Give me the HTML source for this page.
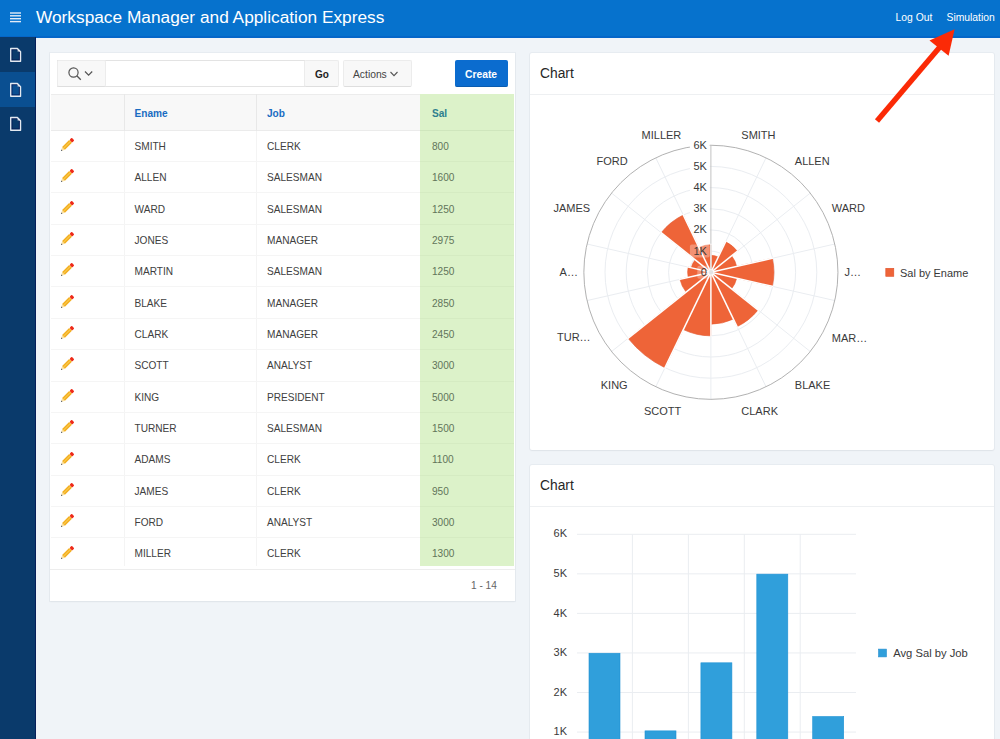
<!DOCTYPE html>
<html><head><meta charset="utf-8">
<style>
*{box-sizing:border-box;margin:0;padding:0}
html,body{width:1000px;height:739px;overflow:hidden;background:#f0f4f8;font-family:"Liberation Sans",sans-serif;color:#333}
.a{position:absolute;white-space:nowrap}
.hdr{position:absolute;left:0;top:0;width:1000px;height:37.5px;background:#0672cd;box-shadow:inset 0 -2px 0 #0566c8}
.title{left:36px;top:7.2px;font-size:17.3px;color:#fff}
.lk{top:12px;font-size:10.35px;color:#fff}
.side{position:absolute;left:0;top:37px;width:36px;height:702px;background:#0a3a6b;border-right:1px solid #061f5a}
.card{position:absolute;background:#fff;box-shadow:0 0 0 1px rgba(0,20,60,.035),0 1px 2px rgba(0,0,0,.04)}
.rtitle{left:10px;top:13.7px;font-size:13.8px;color:#262626}
.rhdr{position:absolute;left:0;top:0;right:0;height:42px;border-bottom:1px solid #eef0f2}
.btn{position:absolute;background:#f8f8f8;border:1px solid #ececec;border-bottom-color:#dedede;border-radius:2px}
.cell{font-size:10.1px;color:#404040}
.hcell{font-size:10.1px;font-weight:bold;color:#1a6cc2}
.vline{position:absolute;width:1px;background:#f4f4f4}
.hline{position:absolute;height:1px;background:#f5f5f5}
</style></head><body>

<div class="hdr">
<svg class="a" style="left:10px;top:12px" width="11" height="11" viewBox="0 0 11 11"><rect x="0" y="0.3" width="11" height="1.4" fill="#e3ecf7"/><rect x="0" y="3.1" width="11" height="1.4" fill="#e3ecf7"/><rect x="0" y="6.0" width="11" height="1.4" fill="#e3ecf7"/><rect x="0" y="8.9" width="11" height="1.4" fill="#e3ecf7"/></svg>
<div class="a title">Workspace Manager and Application Express</div>
<div class="a lk" style="left:895.5px">Log Out</div>
<div class="a lk" style="left:946.5px">Simulation</div>
</div>
<div class="side">
<div class="a" style="left:0;top:35px;width:35px;height:34.5px;background:#0a4f91"></div>
<svg class="a" style="left:10px;top:10.0px" width="12" height="16" viewBox="0 0 12 16"><path d="M1.85 2.65 H6.9 L9.4 5.1 V13.05 H1.85 Z" fill="none" stroke="#03124f" stroke-width="0.9"/><path d="M0.7 1.5 H7.4 L10.55 4.65 V14.2 H0.7 Z" fill="none" stroke="#e4e9f0" stroke-width="1.35" stroke-linejoin="round"/><path d="M7.6 1.9 L10.1 4.4 L7.6 4.4 Z" fill="#e4e9f0"/></svg>
<svg class="a" style="left:10px;top:44.5px" width="12" height="16" viewBox="0 0 12 16"><path d="M1.85 2.65 H6.9 L9.4 5.1 V13.05 H1.85 Z" fill="none" stroke="#03124f" stroke-width="0.9"/><path d="M0.7 1.5 H7.4 L10.55 4.65 V14.2 H0.7 Z" fill="none" stroke="#e4e9f0" stroke-width="1.35" stroke-linejoin="round"/><path d="M7.6 1.9 L10.1 4.4 L7.6 4.4 Z" fill="#e4e9f0"/></svg>
<svg class="a" style="left:10px;top:79.0px" width="12" height="16" viewBox="0 0 12 16"><path d="M1.85 2.65 H6.9 L9.4 5.1 V13.05 H1.85 Z" fill="none" stroke="#03124f" stroke-width="0.9"/><path d="M0.7 1.5 H7.4 L10.55 4.65 V14.2 H0.7 Z" fill="none" stroke="#e4e9f0" stroke-width="1.35" stroke-linejoin="round"/><path d="M7.6 1.9 L10.1 4.4 L7.6 4.4 Z" fill="#e4e9f0"/></svg>
</div>
<div class="card" style="left:50px;top:52.5px;width:465px;height:548px"></div>
<div class="a" style="left:57px;top:60px;width:248px;height:27px;border:1px solid #e3e3e3;background:#fff"></div>
<div class="btn" style="left:57px;top:60px;width:49px;height:27px"></div>
<svg class="a" style="left:66px;top:66px" width="30" height="16" viewBox="0 0 30 16"><circle cx="7.5" cy="6.5" r="4.6" fill="none" stroke="#555" stroke-width="1.2"/><path d="M10.8 9.8 L14.8 13.8" stroke="#555" stroke-width="1.3"/><path d="M19 5.5 L22.6 9.2 L26.2 5.5" fill="none" stroke="#555" stroke-width="1.2"/></svg>
<div class="btn" style="left:304px;top:60px;width:35px;height:27px"></div>
<div class="a" style="left:315px;top:68.8px;font-size:10px;font-weight:bold;color:#222">Go</div>
<div class="btn" style="left:343px;top:60px;width:69px;height:27px"></div>
<div class="a" style="left:353px;top:68.8px;font-size:10.3px;color:#444">Actions</div>
<svg class="a" style="left:389px;top:70px" width="10" height="8" viewBox="0 0 10 8"><path d="M1.5 2 L5 5.6 L8.5 2" fill="none" stroke="#555" stroke-width="1.1"/></svg>
<div class="a" style="left:455px;top:60px;width:53px;height:27px;background:#0b6ccf;border-radius:2px;border-bottom:1px solid #0a5cb0"></div>
<div class="a" style="left:465px;top:69px;font-size:10.3px;font-weight:bold;color:#fff">Create</div>
<div class="a" style="left:51px;top:94.2px;width:369px;height:36.5px;background:#f8f8f8;border-top:1px solid #ececec;border-bottom:1px solid #ebebeb"></div>
<div class="a" style="left:420px;top:94.2px;width:94px;height:471.4px;background:#dcf2c9"></div>
<div class="a" style="left:420px;top:129.7px;width:94px;height:1px;background:#cfe6bd"></div>
<div class="vline" style="left:124px;top:94.2px;height:36.5px;background:#e8e8e8"></div>
<div class="vline" style="left:124px;top:130.7px;height:434.9px"></div>
<div class="vline" style="left:256px;top:94.2px;height:36.5px;background:#e8e8e8"></div>
<div class="vline" style="left:256px;top:130.7px;height:434.9px"></div>
<div class="hline" style="left:51px;top:161.0px;width:369px"></div>
<div class="hline" style="left:420px;top:161.0px;width:94px;background:#d5ebc2"></div>
<div class="hline" style="left:51px;top:192.4px;width:369px"></div>
<div class="hline" style="left:420px;top:192.4px;width:94px;background:#d5ebc2"></div>
<div class="hline" style="left:51px;top:223.8px;width:369px"></div>
<div class="hline" style="left:420px;top:223.8px;width:94px;background:#d5ebc2"></div>
<div class="hline" style="left:51px;top:255.1px;width:369px"></div>
<div class="hline" style="left:420px;top:255.1px;width:94px;background:#d5ebc2"></div>
<div class="hline" style="left:51px;top:286.4px;width:369px"></div>
<div class="hline" style="left:420px;top:286.4px;width:94px;background:#d5ebc2"></div>
<div class="hline" style="left:51px;top:317.8px;width:369px"></div>
<div class="hline" style="left:420px;top:317.8px;width:94px;background:#d5ebc2"></div>
<div class="hline" style="left:51px;top:349.1px;width:369px"></div>
<div class="hline" style="left:420px;top:349.1px;width:94px;background:#d5ebc2"></div>
<div class="hline" style="left:51px;top:380.5px;width:369px"></div>
<div class="hline" style="left:420px;top:380.5px;width:94px;background:#d5ebc2"></div>
<div class="hline" style="left:51px;top:411.9px;width:369px"></div>
<div class="hline" style="left:420px;top:411.9px;width:94px;background:#d5ebc2"></div>
<div class="hline" style="left:51px;top:443.2px;width:369px"></div>
<div class="hline" style="left:420px;top:443.2px;width:94px;background:#d5ebc2"></div>
<div class="hline" style="left:51px;top:474.6px;width:369px"></div>
<div class="hline" style="left:420px;top:474.6px;width:94px;background:#d5ebc2"></div>
<div class="hline" style="left:51px;top:505.9px;width:369px"></div>
<div class="hline" style="left:420px;top:505.9px;width:94px;background:#d5ebc2"></div>
<div class="hline" style="left:51px;top:537.2px;width:369px"></div>
<div class="hline" style="left:420px;top:537.2px;width:94px;background:#d5ebc2"></div>
<div class="hline" style="left:50px;top:568.6px;width:465px;background:#ededed"></div>
<div class="a hcell" style="left:134.5px;top:107.8px">Ename</div>
<div class="a hcell" style="left:267px;top:107.8px">Job</div>
<div class="a hcell" style="left:432px;top:107.8px;color:#2e7f8e">Sal</div>
<svg class="a" style="left:59.4px;top:137.0px" width="18" height="18" viewBox="0 0 18 18"><g transform="translate(2,14) rotate(-45)"><path d="M0 0 L3.6 -2 L3.6 2 Z" fill="#fbe0a0"/><path d="M0 0 L1.3 -0.75 L1.3 0.75 Z" fill="#2a3a55"/><rect x="3.6" y="-2" width="9.9" height="4" fill="#f3ae1f"/><rect x="3.6" y="-0.7" width="9.9" height="1.2" fill="#f8c84e"/><rect x="13.9" y="-1.9" width="3.1" height="3.8" rx="0.9" fill="#ee2a18"/></g></svg>
<div class="a cell" style="left:134.5px;top:140.9px">SMITH</div>
<div class="a cell" style="left:267px;top:140.9px">CLERK</div>
<div class="a cell" style="left:432px;top:140.9px;color:#62755a">800</div>
<svg class="a" style="left:59.4px;top:168.3px" width="18" height="18" viewBox="0 0 18 18"><g transform="translate(2,14) rotate(-45)"><path d="M0 0 L3.6 -2 L3.6 2 Z" fill="#fbe0a0"/><path d="M0 0 L1.3 -0.75 L1.3 0.75 Z" fill="#2a3a55"/><rect x="3.6" y="-2" width="9.9" height="4" fill="#f3ae1f"/><rect x="3.6" y="-0.7" width="9.9" height="1.2" fill="#f8c84e"/><rect x="13.9" y="-1.9" width="3.1" height="3.8" rx="0.9" fill="#ee2a18"/></g></svg>
<div class="a cell" style="left:134.5px;top:172.2px">ALLEN</div>
<div class="a cell" style="left:267px;top:172.2px">SALESMAN</div>
<div class="a cell" style="left:432px;top:172.2px;color:#62755a">1600</div>
<svg class="a" style="left:59.4px;top:199.7px" width="18" height="18" viewBox="0 0 18 18"><g transform="translate(2,14) rotate(-45)"><path d="M0 0 L3.6 -2 L3.6 2 Z" fill="#fbe0a0"/><path d="M0 0 L1.3 -0.75 L1.3 0.75 Z" fill="#2a3a55"/><rect x="3.6" y="-2" width="9.9" height="4" fill="#f3ae1f"/><rect x="3.6" y="-0.7" width="9.9" height="1.2" fill="#f8c84e"/><rect x="13.9" y="-1.9" width="3.1" height="3.8" rx="0.9" fill="#ee2a18"/></g></svg>
<div class="a cell" style="left:134.5px;top:203.6px">WARD</div>
<div class="a cell" style="left:267px;top:203.6px">SALESMAN</div>
<div class="a cell" style="left:432px;top:203.6px;color:#62755a">1250</div>
<svg class="a" style="left:59.4px;top:231.1px" width="18" height="18" viewBox="0 0 18 18"><g transform="translate(2,14) rotate(-45)"><path d="M0 0 L3.6 -2 L3.6 2 Z" fill="#fbe0a0"/><path d="M0 0 L1.3 -0.75 L1.3 0.75 Z" fill="#2a3a55"/><rect x="3.6" y="-2" width="9.9" height="4" fill="#f3ae1f"/><rect x="3.6" y="-0.7" width="9.9" height="1.2" fill="#f8c84e"/><rect x="13.9" y="-1.9" width="3.1" height="3.8" rx="0.9" fill="#ee2a18"/></g></svg>
<div class="a cell" style="left:134.5px;top:234.9px">JONES</div>
<div class="a cell" style="left:267px;top:234.9px">MANAGER</div>
<div class="a cell" style="left:432px;top:234.9px;color:#62755a">2975</div>
<svg class="a" style="left:59.4px;top:262.4px" width="18" height="18" viewBox="0 0 18 18"><g transform="translate(2,14) rotate(-45)"><path d="M0 0 L3.6 -2 L3.6 2 Z" fill="#fbe0a0"/><path d="M0 0 L1.3 -0.75 L1.3 0.75 Z" fill="#2a3a55"/><rect x="3.6" y="-2" width="9.9" height="4" fill="#f3ae1f"/><rect x="3.6" y="-0.7" width="9.9" height="1.2" fill="#f8c84e"/><rect x="13.9" y="-1.9" width="3.1" height="3.8" rx="0.9" fill="#ee2a18"/></g></svg>
<div class="a cell" style="left:134.5px;top:266.3px">MARTIN</div>
<div class="a cell" style="left:267px;top:266.3px">SALESMAN</div>
<div class="a cell" style="left:432px;top:266.3px;color:#62755a">1250</div>
<svg class="a" style="left:59.4px;top:293.8px" width="18" height="18" viewBox="0 0 18 18"><g transform="translate(2,14) rotate(-45)"><path d="M0 0 L3.6 -2 L3.6 2 Z" fill="#fbe0a0"/><path d="M0 0 L1.3 -0.75 L1.3 0.75 Z" fill="#2a3a55"/><rect x="3.6" y="-2" width="9.9" height="4" fill="#f3ae1f"/><rect x="3.6" y="-0.7" width="9.9" height="1.2" fill="#f8c84e"/><rect x="13.9" y="-1.9" width="3.1" height="3.8" rx="0.9" fill="#ee2a18"/></g></svg>
<div class="a cell" style="left:134.5px;top:297.6px">BLAKE</div>
<div class="a cell" style="left:267px;top:297.6px">MANAGER</div>
<div class="a cell" style="left:432px;top:297.6px;color:#62755a">2850</div>
<svg class="a" style="left:59.4px;top:325.1px" width="18" height="18" viewBox="0 0 18 18"><g transform="translate(2,14) rotate(-45)"><path d="M0 0 L3.6 -2 L3.6 2 Z" fill="#fbe0a0"/><path d="M0 0 L1.3 -0.75 L1.3 0.75 Z" fill="#2a3a55"/><rect x="3.6" y="-2" width="9.9" height="4" fill="#f3ae1f"/><rect x="3.6" y="-0.7" width="9.9" height="1.2" fill="#f8c84e"/><rect x="13.9" y="-1.9" width="3.1" height="3.8" rx="0.9" fill="#ee2a18"/></g></svg>
<div class="a cell" style="left:134.5px;top:329.0px">CLARK</div>
<div class="a cell" style="left:267px;top:329.0px">MANAGER</div>
<div class="a cell" style="left:432px;top:329.0px;color:#62755a">2450</div>
<svg class="a" style="left:59.4px;top:356.4px" width="18" height="18" viewBox="0 0 18 18"><g transform="translate(2,14) rotate(-45)"><path d="M0 0 L3.6 -2 L3.6 2 Z" fill="#fbe0a0"/><path d="M0 0 L1.3 -0.75 L1.3 0.75 Z" fill="#2a3a55"/><rect x="3.6" y="-2" width="9.9" height="4" fill="#f3ae1f"/><rect x="3.6" y="-0.7" width="9.9" height="1.2" fill="#f8c84e"/><rect x="13.9" y="-1.9" width="3.1" height="3.8" rx="0.9" fill="#ee2a18"/></g></svg>
<div class="a cell" style="left:134.5px;top:360.3px">SCOTT</div>
<div class="a cell" style="left:267px;top:360.3px">ANALYST</div>
<div class="a cell" style="left:432px;top:360.3px;color:#62755a">3000</div>
<svg class="a" style="left:59.4px;top:387.8px" width="18" height="18" viewBox="0 0 18 18"><g transform="translate(2,14) rotate(-45)"><path d="M0 0 L3.6 -2 L3.6 2 Z" fill="#fbe0a0"/><path d="M0 0 L1.3 -0.75 L1.3 0.75 Z" fill="#2a3a55"/><rect x="3.6" y="-2" width="9.9" height="4" fill="#f3ae1f"/><rect x="3.6" y="-0.7" width="9.9" height="1.2" fill="#f8c84e"/><rect x="13.9" y="-1.9" width="3.1" height="3.8" rx="0.9" fill="#ee2a18"/></g></svg>
<div class="a cell" style="left:134.5px;top:391.7px">KING</div>
<div class="a cell" style="left:267px;top:391.7px">PRESIDENT</div>
<div class="a cell" style="left:432px;top:391.7px;color:#62755a">5000</div>
<svg class="a" style="left:59.4px;top:419.2px" width="18" height="18" viewBox="0 0 18 18"><g transform="translate(2,14) rotate(-45)"><path d="M0 0 L3.6 -2 L3.6 2 Z" fill="#fbe0a0"/><path d="M0 0 L1.3 -0.75 L1.3 0.75 Z" fill="#2a3a55"/><rect x="3.6" y="-2" width="9.9" height="4" fill="#f3ae1f"/><rect x="3.6" y="-0.7" width="9.9" height="1.2" fill="#f8c84e"/><rect x="13.9" y="-1.9" width="3.1" height="3.8" rx="0.9" fill="#ee2a18"/></g></svg>
<div class="a cell" style="left:134.5px;top:423.0px">TURNER</div>
<div class="a cell" style="left:267px;top:423.0px">SALESMAN</div>
<div class="a cell" style="left:432px;top:423.0px;color:#62755a">1500</div>
<svg class="a" style="left:59.4px;top:450.5px" width="18" height="18" viewBox="0 0 18 18"><g transform="translate(2,14) rotate(-45)"><path d="M0 0 L3.6 -2 L3.6 2 Z" fill="#fbe0a0"/><path d="M0 0 L1.3 -0.75 L1.3 0.75 Z" fill="#2a3a55"/><rect x="3.6" y="-2" width="9.9" height="4" fill="#f3ae1f"/><rect x="3.6" y="-0.7" width="9.9" height="1.2" fill="#f8c84e"/><rect x="13.9" y="-1.9" width="3.1" height="3.8" rx="0.9" fill="#ee2a18"/></g></svg>
<div class="a cell" style="left:134.5px;top:454.4px">ADAMS</div>
<div class="a cell" style="left:267px;top:454.4px">CLERK</div>
<div class="a cell" style="left:432px;top:454.4px;color:#62755a">1100</div>
<svg class="a" style="left:59.4px;top:481.9px" width="18" height="18" viewBox="0 0 18 18"><g transform="translate(2,14) rotate(-45)"><path d="M0 0 L3.6 -2 L3.6 2 Z" fill="#fbe0a0"/><path d="M0 0 L1.3 -0.75 L1.3 0.75 Z" fill="#2a3a55"/><rect x="3.6" y="-2" width="9.9" height="4" fill="#f3ae1f"/><rect x="3.6" y="-0.7" width="9.9" height="1.2" fill="#f8c84e"/><rect x="13.9" y="-1.9" width="3.1" height="3.8" rx="0.9" fill="#ee2a18"/></g></svg>
<div class="a cell" style="left:134.5px;top:485.7px">JAMES</div>
<div class="a cell" style="left:267px;top:485.7px">CLERK</div>
<div class="a cell" style="left:432px;top:485.7px;color:#62755a">950</div>
<svg class="a" style="left:59.4px;top:513.2px" width="18" height="18" viewBox="0 0 18 18"><g transform="translate(2,14) rotate(-45)"><path d="M0 0 L3.6 -2 L3.6 2 Z" fill="#fbe0a0"/><path d="M0 0 L1.3 -0.75 L1.3 0.75 Z" fill="#2a3a55"/><rect x="3.6" y="-2" width="9.9" height="4" fill="#f3ae1f"/><rect x="3.6" y="-0.7" width="9.9" height="1.2" fill="#f8c84e"/><rect x="13.9" y="-1.9" width="3.1" height="3.8" rx="0.9" fill="#ee2a18"/></g></svg>
<div class="a cell" style="left:134.5px;top:517.1px">FORD</div>
<div class="a cell" style="left:267px;top:517.1px">ANALYST</div>
<div class="a cell" style="left:432px;top:517.1px;color:#62755a">3000</div>
<svg class="a" style="left:59.4px;top:544.5px" width="18" height="18" viewBox="0 0 18 18"><g transform="translate(2,14) rotate(-45)"><path d="M0 0 L3.6 -2 L3.6 2 Z" fill="#fbe0a0"/><path d="M0 0 L1.3 -0.75 L1.3 0.75 Z" fill="#2a3a55"/><rect x="3.6" y="-2" width="9.9" height="4" fill="#f3ae1f"/><rect x="3.6" y="-0.7" width="9.9" height="1.2" fill="#f8c84e"/><rect x="13.9" y="-1.9" width="3.1" height="3.8" rx="0.9" fill="#ee2a18"/></g></svg>
<div class="a cell" style="left:134.5px;top:548.4px">MILLER</div>
<div class="a cell" style="left:267px;top:548.4px">CLERK</div>
<div class="a cell" style="left:432px;top:548.4px;color:#62755a">1300</div>
<div class="a cell" style="left:471px;top:580.1px;color:#666">1 - 14</div>
<div class="card" style="left:530px;top:52.5px;width:464px;height:397.8px;border-radius:2px"><div class="rhdr"></div><div class="a rtitle">Chart</div></div>
<div class="card" style="left:530px;top:464.5px;width:464px;height:290px;border-radius:2px"><div class="rhdr"></div><div class="a rtitle">Chart</div></div>
<svg class="a" style="left:0;top:0" width="1000" height="739" viewBox="0 0 1000 739">
<circle cx="710.90" cy="272.30" r="21.18" fill="none" stroke="#eaedf1" stroke-width="1"/>
<circle cx="710.90" cy="272.30" r="42.35" fill="none" stroke="#eaedf1" stroke-width="1"/>
<circle cx="710.90" cy="272.30" r="63.52" fill="none" stroke="#eaedf1" stroke-width="1"/>
<circle cx="710.90" cy="272.30" r="84.70" fill="none" stroke="#eaedf1" stroke-width="1"/>
<circle cx="710.90" cy="272.30" r="105.88" fill="none" stroke="#eaedf1" stroke-width="1"/>
<line x1="710.90" y1="272.30" x2="766.02" y2="157.83" stroke="#eaedf1" stroke-width="1"/>
<line x1="710.90" y1="272.30" x2="810.23" y2="193.09" stroke="#eaedf1" stroke-width="1"/>
<line x1="710.90" y1="272.30" x2="834.76" y2="244.03" stroke="#eaedf1" stroke-width="1"/>
<line x1="710.90" y1="272.30" x2="834.76" y2="300.57" stroke="#eaedf1" stroke-width="1"/>
<line x1="710.90" y1="272.30" x2="810.23" y2="351.51" stroke="#eaedf1" stroke-width="1"/>
<line x1="710.90" y1="272.30" x2="766.02" y2="386.77" stroke="#eaedf1" stroke-width="1"/>
<line x1="710.90" y1="272.30" x2="710.90" y2="399.35" stroke="#eaedf1" stroke-width="1"/>
<line x1="710.90" y1="272.30" x2="655.78" y2="386.77" stroke="#eaedf1" stroke-width="1"/>
<line x1="710.90" y1="272.30" x2="611.57" y2="351.51" stroke="#eaedf1" stroke-width="1"/>
<line x1="710.90" y1="272.30" x2="587.04" y2="300.57" stroke="#eaedf1" stroke-width="1"/>
<line x1="710.90" y1="272.30" x2="587.04" y2="244.03" stroke="#eaedf1" stroke-width="1"/>
<line x1="710.90" y1="272.30" x2="611.57" y2="193.09" stroke="#eaedf1" stroke-width="1"/>
<line x1="710.90" y1="272.30" x2="655.78" y2="157.83" stroke="#eaedf1" stroke-width="1"/>
<circle cx="710.90" cy="272.30" r="127.05" fill="none" stroke="#a8a8a8" stroke-width="0.9"/>
<rect x="697.30" y="265.80" width="12.40" height="13" rx="2" fill="#fff"/>
<rect x="689.90" y="244.62" width="19.80" height="13" rx="2" fill="#fff"/>
<rect x="689.90" y="223.45" width="19.80" height="13" rx="2" fill="#fff"/>
<rect x="689.90" y="202.28" width="19.80" height="13" rx="2" fill="#fff"/>
<rect x="689.90" y="181.10" width="19.80" height="13" rx="2" fill="#fff"/>
<rect x="689.90" y="159.93" width="19.80" height="13" rx="2" fill="#fff"/>
<rect x="689.90" y="138.75" width="19.80" height="13" rx="2" fill="#fff"/>
<line x1="710.90" y1="272.30" x2="710.90" y2="145.25" stroke="#c2c2c2" stroke-width="1"/>
<path d="M710.90 272.30 L710.90 255.36 A16.94 16.94 0 0 1 718.25 257.04 Z" fill="#ee6438" stroke="#e9562a" stroke-width="0.6"/>
<path d="M710.90 272.30 L725.60 241.78 A33.88 33.88 0 0 1 737.39 251.18 Z" fill="#ee6438" stroke="#e9562a" stroke-width="0.6"/>
<path d="M710.90 272.30 L731.59 255.80 A26.47 26.47 0 0 1 736.71 266.41 Z" fill="#ee6438" stroke="#e9562a" stroke-width="0.6"/>
<path d="M710.90 272.30 L772.32 258.28 A63.00 63.00 0 0 1 772.32 286.32 Z" fill="#ee6438" stroke="#e9562a" stroke-width="0.6"/>
<path d="M710.90 272.30 L736.71 278.19 A26.47 26.47 0 0 1 731.59 288.80 Z" fill="#ee6438" stroke="#e9562a" stroke-width="0.6"/>
<path d="M710.90 272.30 L758.08 309.93 A60.35 60.35 0 0 1 737.08 326.67 Z" fill="#ee6438" stroke="#e9562a" stroke-width="0.6"/>
<path d="M710.90 272.30 L733.41 319.04 A51.88 51.88 0 0 1 710.90 324.18 Z" fill="#ee6438" stroke="#e9562a" stroke-width="0.6"/>
<path d="M710.90 272.30 L710.90 335.82 A63.52 63.52 0 0 1 683.34 329.53 Z" fill="#ee6438" stroke="#e9562a" stroke-width="0.6"/>
<path d="M710.90 272.30 L664.96 367.69 A105.88 105.88 0 0 1 628.12 338.31 Z" fill="#ee6438" stroke="#e9562a" stroke-width="0.6"/>
<path d="M710.90 272.30 L686.07 292.10 A31.76 31.76 0 0 1 679.93 279.37 Z" fill="#ee6438" stroke="#e9562a" stroke-width="0.6"/>
<path d="M710.90 272.30 L688.19 277.48 A23.29 23.29 0 0 1 688.19 267.12 Z" fill="#ee6438" stroke="#e9562a" stroke-width="0.6"/>
<path d="M710.90 272.30 L691.29 267.82 A20.12 20.12 0 0 1 695.17 259.76 Z" fill="#ee6438" stroke="#e9562a" stroke-width="0.6"/>
<path d="M710.90 272.30 L661.23 232.69 A63.52 63.52 0 0 1 683.34 215.07 Z" fill="#ee6438" stroke="#e9562a" stroke-width="0.6"/>
<path d="M710.90 272.30 L698.96 247.50 A27.53 27.53 0 0 1 710.90 244.77 Z" fill="#ee6438" stroke="#e9562a" stroke-width="0.6"/>
<line x1="710.90" y1="272.30" x2="710.90" y2="243.77" stroke="#fff" stroke-width="1.5"/>
<line x1="710.90" y1="272.30" x2="726.03" y2="240.87" stroke="#fff" stroke-width="1.5"/>
<line x1="710.90" y1="272.30" x2="738.17" y2="250.55" stroke="#fff" stroke-width="1.5"/>
<line x1="710.90" y1="272.30" x2="773.29" y2="258.06" stroke="#fff" stroke-width="1.5"/>
<line x1="710.90" y1="272.30" x2="773.29" y2="286.54" stroke="#fff" stroke-width="1.5"/>
<line x1="710.90" y1="272.30" x2="758.86" y2="310.55" stroke="#fff" stroke-width="1.5"/>
<line x1="710.90" y1="272.30" x2="737.52" y2="327.57" stroke="#fff" stroke-width="1.5"/>
<line x1="710.90" y1="272.30" x2="710.90" y2="336.83" stroke="#fff" stroke-width="1.5"/>
<line x1="710.90" y1="272.30" x2="664.53" y2="368.59" stroke="#fff" stroke-width="1.5"/>
<line x1="710.90" y1="272.30" x2="627.34" y2="338.94" stroke="#fff" stroke-width="1.5"/>
<line x1="710.90" y1="272.30" x2="678.96" y2="279.59" stroke="#fff" stroke-width="1.5"/>
<line x1="710.90" y1="272.30" x2="687.22" y2="266.89" stroke="#fff" stroke-width="1.5"/>
<line x1="710.90" y1="272.30" x2="660.45" y2="232.07" stroke="#fff" stroke-width="1.5"/>
<line x1="710.90" y1="272.30" x2="682.90" y2="214.16" stroke="#fff" stroke-width="1.5"/>
<line x1="710.90" y1="272.30" x2="710.90" y2="244.77" stroke="#d6d6d6" stroke-width="1"/>
<circle cx="710.90" cy="272.30" r="2.8" fill="#e4e4e4" stroke="#fff" stroke-width="0.8"/>
<rect x="697.30" y="265.80" width="12.40" height="13" rx="2" fill="#fff" fill-opacity="0.3"/>
<text x="706.90" y="275.70" font-size="11" fill="#3a3a3a" text-anchor="end">0</text>
<rect x="689.90" y="244.62" width="19.80" height="13" rx="2" fill="#fff" fill-opacity="0.3"/>
<text x="706.90" y="254.53" font-size="11" fill="#3a3a3a" text-anchor="end">1K</text>
<text x="706.90" y="233.35" font-size="11" fill="#3a3a3a" text-anchor="end">2K</text>
<text x="706.90" y="212.18" font-size="11" fill="#3a3a3a" text-anchor="end">3K</text>
<text x="706.90" y="191.00" font-size="11" fill="#3a3a3a" text-anchor="end">4K</text>
<text x="706.90" y="169.83" font-size="11" fill="#3a3a3a" text-anchor="end">5K</text>
<text x="706.90" y="148.65" font-size="11" fill="#3a3a3a" text-anchor="end">6K</text>
<text x="741.3" y="139.0" font-size="11" fill="#3a3a3a" text-anchor="start">SMITH</text>
<text x="794.8" y="165.0" font-size="11" fill="#3a3a3a" text-anchor="start">ALLEN</text>
<text x="831.8" y="211.7" font-size="11" fill="#3a3a3a" text-anchor="start">WARD</text>
<text x="844.5" y="275.8" font-size="11" fill="#3a3a3a" text-anchor="start">J…</text>
<text x="831.8" y="341.8" font-size="11" fill="#3a3a3a" text-anchor="start">MAR…</text>
<text x="794.8" y="389.0" font-size="11" fill="#3a3a3a" text-anchor="start">BLAKE</text>
<text x="741.3" y="414.6" font-size="11" fill="#3a3a3a" text-anchor="start">CLARK</text>
<text x="681.3" y="414.6" font-size="11" fill="#3a3a3a" text-anchor="end">SCOTT</text>
<text x="627.7" y="389.0" font-size="11" fill="#3a3a3a" text-anchor="end">KING</text>
<text x="590.6" y="341.4" font-size="11" fill="#3a3a3a" text-anchor="end">TUR…</text>
<text x="577.9" y="276.3" font-size="11" fill="#3a3a3a" text-anchor="end">A…</text>
<text x="590.2" y="211.7" font-size="11" fill="#3a3a3a" text-anchor="end">JAMES</text>
<text x="627.7" y="165.0" font-size="11" fill="#3a3a3a" text-anchor="end">FORD</text>
<text x="681.3" y="139.0" font-size="11" fill="#3a3a3a" text-anchor="end">MILLER</text>
<rect x="885.8" y="268.3" width="8" height="8" fill="#ee6438" stroke="#e0502a" stroke-width="0.6"/>
<text x="900" y="276.5" font-size="11" fill="#383838" textLength="68.3" lengthAdjust="spacingAndGlyphs">Sal by Ename</text>
<line x1="577" y1="732.05" x2="856" y2="732.05" stroke="#eaedf1" stroke-width="1"/>
<text x="567" y="735.15" font-size="11" fill="#3a3a3a" text-anchor="end">1K</text>
<line x1="577" y1="692.50" x2="856" y2="692.50" stroke="#eaedf1" stroke-width="1"/>
<text x="567" y="695.60" font-size="11" fill="#3a3a3a" text-anchor="end">2K</text>
<line x1="577" y1="652.95" x2="856" y2="652.95" stroke="#eaedf1" stroke-width="1"/>
<text x="567" y="656.05" font-size="11" fill="#3a3a3a" text-anchor="end">3K</text>
<line x1="577" y1="613.40" x2="856" y2="613.40" stroke="#eaedf1" stroke-width="1"/>
<text x="567" y="616.50" font-size="11" fill="#3a3a3a" text-anchor="end">4K</text>
<line x1="577" y1="573.85" x2="856" y2="573.85" stroke="#eaedf1" stroke-width="1"/>
<text x="567" y="576.95" font-size="11" fill="#3a3a3a" text-anchor="end">5K</text>
<line x1="577" y1="534.30" x2="856" y2="534.30" stroke="#eaedf1" stroke-width="1"/>
<text x="567" y="537.40" font-size="11" fill="#3a3a3a" text-anchor="end">6K</text>
<line x1="632.4" y1="534.30" x2="632.4" y2="739" stroke="#eaedf1" stroke-width="1"/>
<line x1="688.4" y1="534.30" x2="688.4" y2="739" stroke="#eaedf1" stroke-width="1"/>
<line x1="744.3" y1="534.30" x2="744.3" y2="739" stroke="#eaedf1" stroke-width="1"/>
<line x1="800.2" y1="534.30" x2="800.2" y2="739" stroke="#eaedf1" stroke-width="1"/>
<rect x="589.0" y="653.25" width="31" height="128.65" fill="#309fdb" stroke="#1f92d4" stroke-width="0.6"/>
<rect x="645.0" y="730.87" width="31" height="51.03" fill="#309fdb" stroke="#1f92d4" stroke-width="0.6"/>
<rect x="700.9" y="662.81" width="31" height="119.09" fill="#309fdb" stroke="#1f92d4" stroke-width="0.6"/>
<rect x="756.8" y="574.15" width="31" height="207.75" fill="#309fdb" stroke="#1f92d4" stroke-width="0.6"/>
<rect x="812.7" y="716.53" width="31" height="65.37" fill="#309fdb" stroke="#1f92d4" stroke-width="0.6"/>
<rect x="878.5" y="649.1" width="8" height="7.8" fill="#309fdb" stroke="#2a8fd0" stroke-width="0.6"/>
<text x="893.2" y="656.9" font-size="11.2" fill="#383838" textLength="74.6" lengthAdjust="spacingAndGlyphs">Avg Sal by Job</text>
<line x1="877" y1="121" x2="942" y2="44.5" stroke="#fb2a06" stroke-width="5.4" stroke-linecap="butt"/>
<path d="M954.6 29.3 L929.5 40.5 L948.6 55.8 Z" fill="#fb2a06"/>
</svg>
</body></html>
